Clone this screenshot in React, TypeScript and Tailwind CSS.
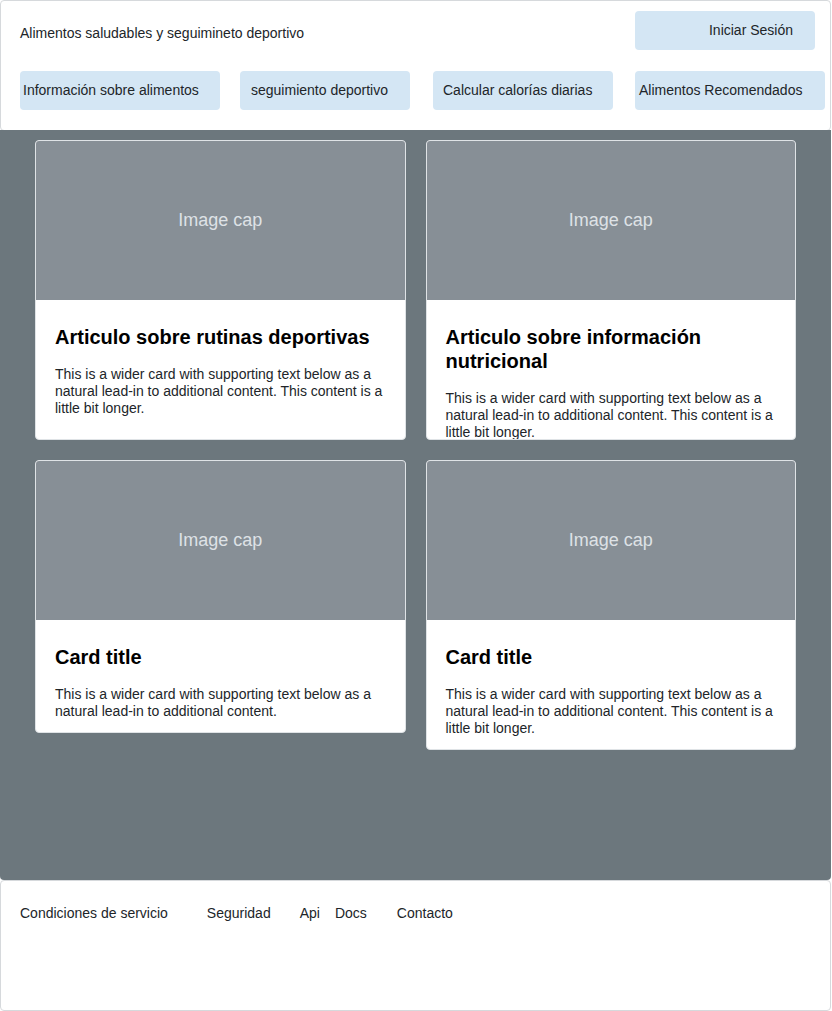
const cards = [
  {
    title: 'Articulo sobre rutinas deportivas',
    text: 'This is a wider card with supporting text below as a natural lead-in to additional content. This content is a little bit longer.',
  },
  {
    title: 'Articulo sobre información nutricional',
    text: 'This is a wider card with supporting text below as a natural lead-in to additional content. This content is a little bit longer.',
  },
  {
    title: 'Card title',
    text: 'This is a wider card with supporting text below as a natural lead-in to additional content.',
  },
  {
    title: 'Card title',
    text: 'This is a wider card with supporting text below as a natural lead-in to additional content. This content is a little bit longer.',
  },
];

function Card({ title, text, fixed }: { title: string; text: string; fixed: boolean }) {
  return (
    <div
      className={`flex flex-col bg-white border border-[#dfe3e6] rounded-[4px] overflow-hidden ${
        fixed ? 'h-[300px]' : 'self-start'
      }`}
    >
      <div className="h-[159px] bg-[#878f96] flex items-center justify-center text-[18px] text-[#dee2e6] shrink-0">
        Image cap
      </div>
      <div className="px-[19px] pt-[25px] pb-[12px]">
        <h5 className="text-[20px] leading-[24px] font-bold text-black mb-[17px]">{title}</h5>
        <p className="text-[14px] leading-[17px] text-[#212529]">{text}</p>
      </div>
    </div>
  );
}

export default function App() {
  return (
    <div className="w-[831px] font-['Liberation_Sans',Arial,sans-serif] text-[#212529]">
      <header className="h-[131px] bg-white border border-[#d6d9dc] rounded-[4px] pl-[19px] overflow-hidden">
        <div className="flex items-center justify-between pt-[10px] pr-[15px]">
          <span className="text-[14px] mt-[5px]">Alimentos saludables y seguimineto deportivo</span>
          <button className="shrink-0 w-[180px] h-[39px] bg-[#d4e6f4] rounded-[4px] text-[14px] flex items-center justify-end pr-[22px]">
            Iniciar Sesión
          </button>
        </div>
        <nav className="flex mt-[21px] text-[14px]">
          <button className="shrink-0 w-[200px] h-[39px] bg-[#d4e6f4] rounded-[4px] flex items-center pl-[3px]">
            Información sobre alimentos
          </button>
          <button className="shrink-0 w-[170px] h-[39px] bg-[#d4e6f4] rounded-[4px] flex items-center pl-[11px] ml-[20px]">
            seguimiento deportivo
          </button>
          <button className="shrink-0 w-[180px] h-[39px] bg-[#d4e6f4] rounded-[4px] flex items-center pl-[10px] ml-[23px]">
            Calcular calorías diarias
          </button>
          <button className="shrink-0 w-[190px] h-[39px] bg-[#d4e6f4] rounded-[4px] flex items-center pl-[4px] ml-[22px]">
            Alimentos Recomendados
          </button>
        </nav>
      </header>
      <main className="h-[750px] -mt-px bg-[#6c777d] rounded-b-[4px] pt-[10px] px-[35px]">
        <div className="grid grid-cols-2 gap-x-[20px] gap-y-[20px]">
          {cards.map((c, i) => (
            <Card key={i} title={c.title} text={c.text} fixed={i < 2} />
          ))}
        </div>
      </main>
      <footer className="h-[131px] bg-white border border-[#d6d9dc] rounded-[4px] px-[19px] pt-[22px]">
        <div className="flex text-[14px]">
          <span>Condiciones de servicio</span>
          <span className="ml-[39px]">Seguridad</span>
          <span className="ml-[29px]">Api</span>
          <span className="ml-[15px]">Docs</span>
          <span className="ml-[30px]">Contacto</span>
        </div>
      </footer>
    </div>
  );
}
